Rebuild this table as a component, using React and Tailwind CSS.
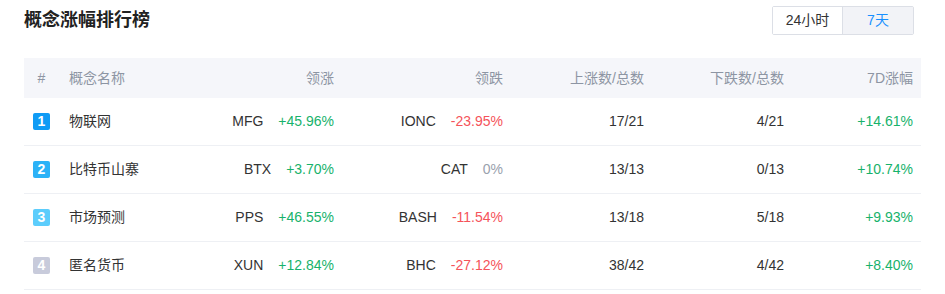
import { useState } from 'react';

const rows = [
  { rank: 1, name: '物联网', upSym: 'MFG', upPct: '+45.96%', downSym: 'IONC', downPct: '-23.95%', up: '17/21', down: '4/21', week: '+14.61%' },
  { rank: 2, name: '比特币山寨', upSym: 'BTX', upPct: '+3.70%', downSym: 'CAT', downPct: '0%', up: '13/13', down: '0/13', week: '+10.74%' },
  { rank: 3, name: '市场预测', upSym: 'PPS', upPct: '+46.55%', downSym: 'BASH', downPct: '-11.54%', up: '13/18', down: '5/18', week: '+9.93%' },
  { rank: 4, name: '匿名货币', upSym: 'XUN', upPct: '+12.84%', downSym: 'BHC', downPct: '-27.12%', up: '38/42', down: '4/42', week: '+8.40%' },
];

const rankColors = {
  1: 'bg-[#0f9bf5]',
  2: 'bg-[#2cb2f7]',
  3: 'bg-[#5ccdfc]',
  4: 'bg-[#c8cbdb]',
};

const pctColor = (v) =>
  v.startsWith('+') ? 'text-[#17b26b]' : v.startsWith('-') ? 'text-[#f5535a]' : 'text-[#9aa1ad]';

const cols = 'grid grid-cols-[45px_145px_120px_169px_141px_140px_138px] items-center';

export default function App() {
  const [range, setRange] = useState('7d');

  return (
    <div className="w-[945px] h-[294px] bg-white px-6 font-['Liberation_Sans','Noto_Sans_CJK_SC',sans-serif] text-[14px] text-[#333]">
      <div className="flex items-start justify-between pt-[6px]">
        <h2 className="pt-[2px] text-[18px] font-bold leading-[24px] text-[#222]">概念涨幅排行榜</h2>
        <div className="mr-[7px] flex h-[29px] rounded-[2px] border border-[#dcdfe6] text-[14px]">
          <button
            onClick={() => setRange('24h')}
            className={`w-[70px] border-r border-[#dcdfe6] ${range === '24h' ? 'bg-[#f2f3f7] text-[#1890ff]' : 'bg-white text-[#333]'}`}
          >
            24小时
          </button>
          <button
            onClick={() => setRange('7d')}
            className={`w-[70px] ${range === '7d' ? 'bg-[#f2f3f7] text-[#1890ff]' : 'bg-white text-[#333]'}`}
          >
            7天
          </button>
        </div>
      </div>

      <div className="mt-[23px]">
        <div className={`${cols} h-10 bg-[#f5f6fa] text-[#8d95a3]`}>
          <div className="pl-[9px]"><span className="inline-block w-[17px] text-center">#</span></div>
          <div>概念名称</div>
          <div className="text-right">领涨</div>
          <div className="text-right">领跌</div>
          <div className="text-right">上涨数/总数</div>
          <div className="text-right">下跌数/总数</div>
          <div className="pr-[9px] text-right">7D涨幅</div>
        </div>

        {rows.map((r) => (
          <div key={r.rank} className={`${cols} h-12 border-b border-[#eef0f4]`}>
            <div className="pl-[9px]">
              <span className={`flex h-[17px] w-[17px] items-center justify-center rounded-[2px] text-[14px] font-bold text-white ${rankColors[r.rank]}`}>
                {r.rank}
              </span>
            </div>
            <div>{r.name}</div>
            <div className="text-right">
              {r.upSym}
              <span className={`ml-[15px] ${pctColor(r.upPct)}`}>{r.upPct}</span>
            </div>
            <div className="text-right">
              {r.downSym}
              <span className={`ml-[15px] ${pctColor(r.downPct)}`}>{r.downPct}</span>
            </div>
            <div className="text-right">{r.up}</div>
            <div className="text-right">{r.down}</div>
            <div className={`pr-[9px] text-right ${pctColor(r.week)}`}>{r.week}</div>
          </div>
        ))}
      </div>
    </div>
  );
}
